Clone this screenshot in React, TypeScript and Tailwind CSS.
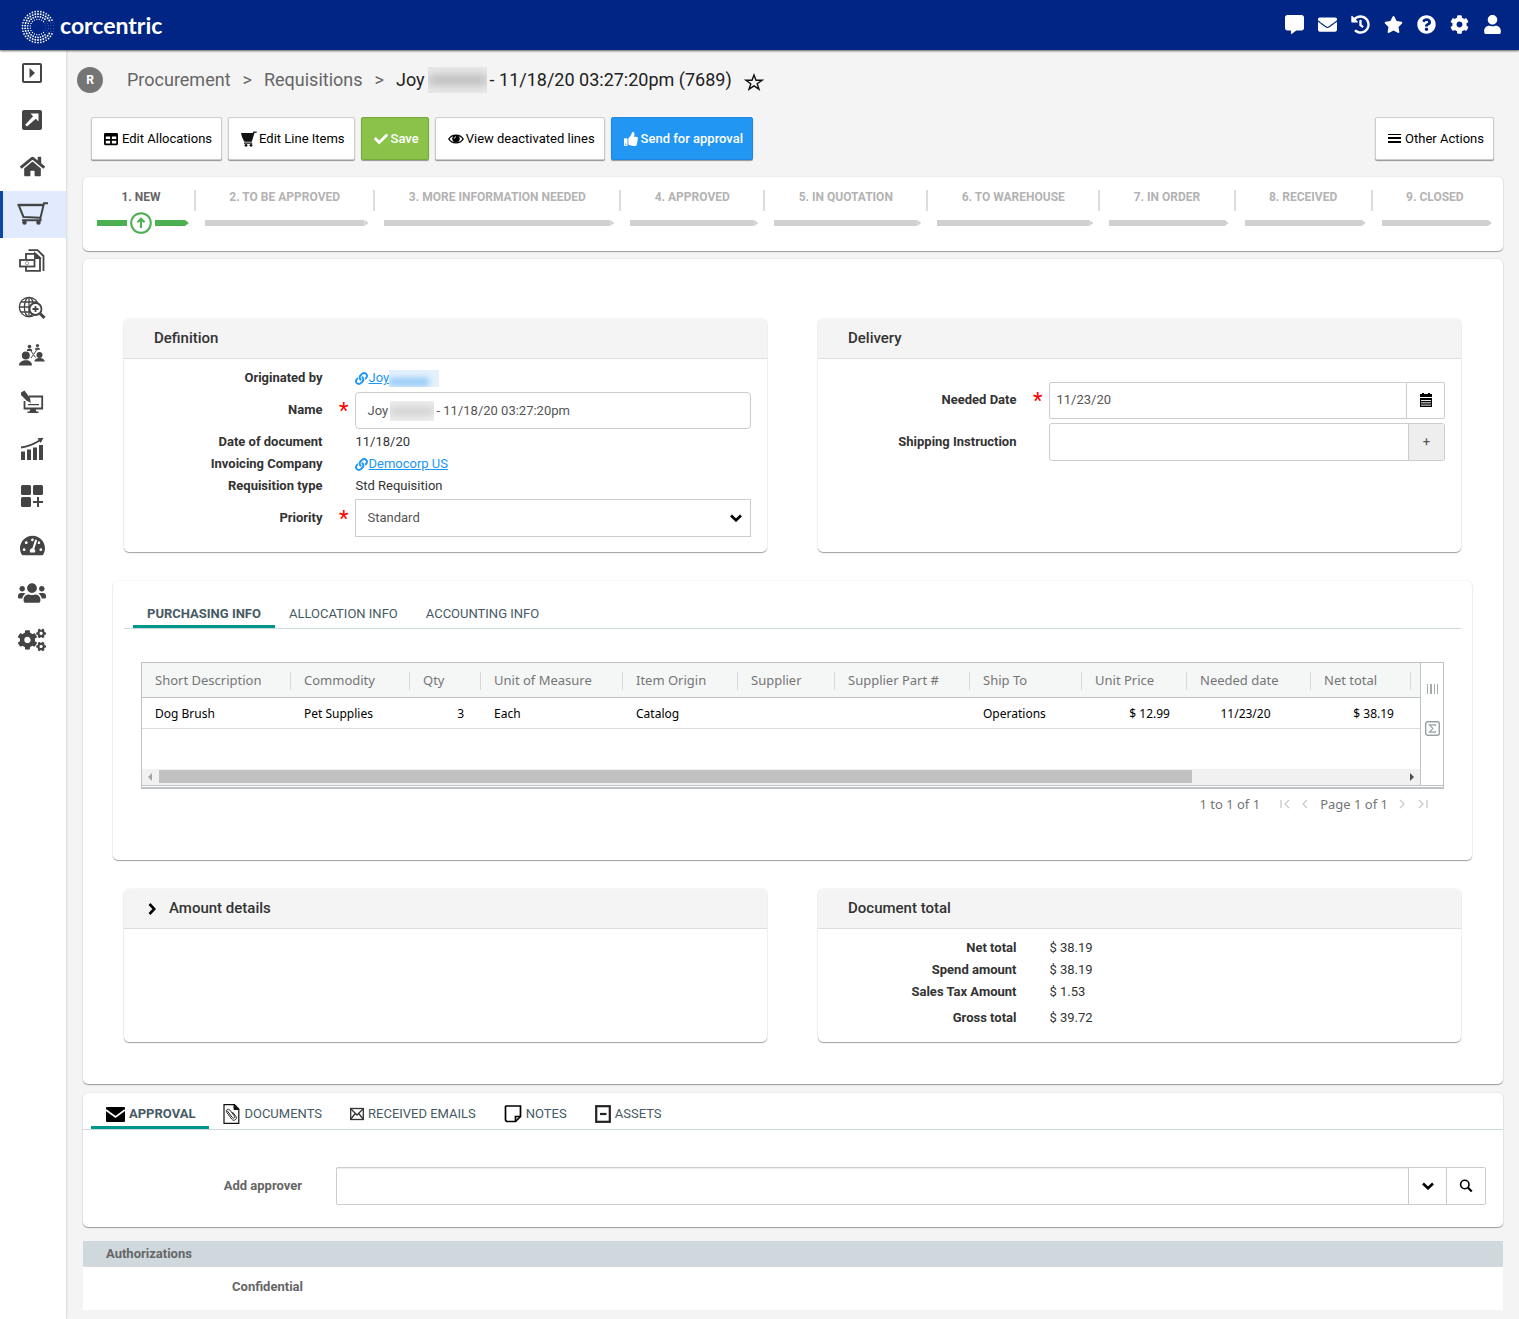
import React, { ReactNode } from 'react';
import {
  FaCheck,
  FaCog,
  FaCogs,
  FaCommentAlt,
  FaEnvelope,
  FaHistory,
  FaHome,
  FaLink,
  FaQuestionCircle,
  FaStar,
  FaTable,
  FaTachometerAlt,
  FaThumbsUp,
  FaUser,
  FaUsers,
} from 'react-icons/fa';

const cardShadow = 'shadow-[0_1px_1px_#00000059,0_0_2px_#0000001f]';

type IconProps = { className?: string };

const LogoMark = () => {
  const rings = [
    { r: 15.6, n: 34, size: 0.85, gap: 0.3 },
    { r: 13, n: 30, size: 0.95, gap: 0.5 },
    { r: 10.4, n: 26, size: 0.85, gap: 0.7 },
    { r: 7.8, n: 20, size: 0.65, gap: 0.75 },
  ];

  return (
    <svg width="34" height="34" viewBox="-17 -17 34 34" fill="#fff" aria-hidden="true">
      {rings.map((ring) =>
        Array.from({ length: ring.n }, (_, i) => {
          const a = ((i + 0.5) / ring.n) * Math.PI * 2;
          const fromRight = Math.min(a, Math.PI * 2 - a);
          const faded = fromRight < ring.gap;
          return (
            <circle
              key={`${ring.r}-${i}`}
              cx={Math.cos(a) * ring.r}
              cy={Math.sin(a) * ring.r}
              r={faded ? 0.4 : ring.size}
              opacity={faded ? 0.6 : 1}
            />
          );
        }),
      )}
    </svg>
  );
};

const PlayBoxIcon = () => (
  <svg width="20" height="20" viewBox="0 0 20 20" fill="none">
    <rect x="1" y="1" width="18" height="18" rx="1" stroke="currentColor" strokeWidth="2" />
    <path d="M7.5 5v10l5.500-5z" fill="currentColor" />
  </svg>
);

const LaunchIcon = () => (
  <svg width="20" height="20" viewBox="0 0 20 20">
    <rect width="20" height="20" rx="2" fill="currentColor" />
    <path d="M8.5 3.5h8v8l-2.7-2.7L5 16.6 3.2 14.800l7.900-8.600z" fill="#fff" />
  </svg>
);

const CartIcon = () => (
  <svg width="31" height="24" viewBox="0 0 31 24" fill="none" stroke="currentColor" strokeWidth="2">
    <path d="M.5 3H26" strokeWidth="2.4" />
    <path d="M2 4l4.500 11 17 .8L27 1.200h4M5 18.200h18.500v-2.500" />
    <circle cx="7.500" cy="20.500" r="2.200" fill="currentColor" stroke="none" />
    <circle cx="21.500" cy="20.500" r="2.200" fill="currentColor" stroke="none" />
  </svg>
);

const InvoiceIcon = () => (
  <svg width="26" height="24" viewBox="0 0 26 24" fill="none" stroke="currentColor" strokeWidth="1.8">
    <path d="M9.500 1.200h9L24.500 7v15M7 10V4.800h9.500L21 9v12.800H7V18" />
    <path d="M16 4.500V9h4.500z" fill="currentColor" />
    <rect x="1" y="11" width="14.500" height="6.500" fill="#fff" />
    <circle cx="8" cy="14.200" r="1.600" strokeWidth=".5" />
  </svg>
);

const GlobeSearchIcon = () => (
  <svg width="28" height="24" viewBox="0 0 28 24" fill="none" stroke="currentColor" strokeWidth="1.3">
    <circle cx="11" cy="11" r="9.700" />
    <ellipse cx="11" cy="11" rx="4.600" ry="9.700" />
    <path d="M11 1.300v19.400M1.300 11h19M3 6h16M3 16h16" />
    <circle cx="17.500" cy="13" r="6" fill="#fff" strokeWidth="1.800" />
    <path d="M17.500 10v6M14.500 13h6" strokeWidth="1.800" />
    <path d="M22 17.500l4.500 4.300" strokeWidth="3" />
  </svg>
);

const NetworkIcon = () => (
  <svg width="26" height="24" viewBox="0 0 26 24" fill="currentColor">
    <circle cx="6.800" cy="12.500" r="4" />
    <path d="M0 22.500c0-3.500 3-4.300 5.200-5.200h3.300c2.300.9 4.500 1.700 4.500 5.200z" />
    <circle cx="20.500" cy="12" r="3" />
    <path d="M15.500 18.500c0-2.600 2.500-3 3.800-3.600h2.600c1.300.6 3.800 1 3.800 3.600z" />
    <circle cx="10.500" cy="3.500" r="1.800" />
    <path d="M7.800 8c0-1.800 1.500-2.200 2.700-2.400 1.200.2 2.700.6 2.700 2.400z" />
    <circle cx="18.500" cy="2.500" r="1.600" />
    <path d="M16 6.800c0-1.600 1.300-2 2.500-2.200 1.200.2 2.500.6 2.500 2.200z" />
    <path d="M12 15l6-8.500M12 8l4.500 6.500" stroke="currentColor" strokeWidth="1" />
  </svg>
);

const DesktopPenIcon = () => (
  <svg width="24" height="24" viewBox="0 0 24 24">
    <path d="M9 6.500h13.200v12H4.500V11" fill="none" stroke="currentColor" strokeWidth="1.800" />
    <path d="M10.500 19h5l1 2.500h2V23h-11v-1.500h2zM8 14h11v1.200H8z" fill="currentColor" />
    <path d="M1 2.500 4.500.5l5.500 7.500.8 5-4.600-2.800L1 5z" fill="currentColor" />
  </svg>
);

const GrowthIcon = () => (
  <svg width="24" height="24" viewBox="0 0 24 24" fill="currentColor">
    <path d="M1 14.500h4V23H1zM7 12.500h4V23H7zM13 10.500h4V23h-4zM19 8h4v15h-4z" />
    <path d="M1 10.500C9 9.500 14 7 20 3.200" fill="none" stroke="currentColor" strokeWidth="1.800" />
    <path d="M17.500 1.200 23.500.8l-2.800 5.200z" />
  </svg>
);

const WidgetsIcon = () => (
  <svg width="22" height="22" viewBox="0 0 22 22" fill="currentColor">
    <rect width="10" height="10" rx="1.500" />
    <rect x="12" width="10" height="10" rx="1.500" />
    <rect y="12" width="10" height="10" rx="1.500" />
    <path d="M16 12h2v4h4v2h-4v4h-2v-4h-4v-2h4z" />
  </svg>
);

const FilledCartIcon = () => (
  <svg width="16" height="16" viewBox="0 0 16 16" fill="#111">
    <path d="M0 2h11.800L12.500.5h3.200v1.200h-2.200l-2.700 9H3.300L1 6zM3 11.500h8.200v1.300H3z" />
    <circle cx="5" cy="14.300" r="1.400" />
    <circle cx="10" cy="14.300" r="1.400" />
  </svg>
);

const EyeIcon = () => (
  <svg width="16" height="12" viewBox="0 0 16 12" fill="none" stroke="#000">
    <path d="M.8 6C4 .8 12 .8 15.200 6 12 11.200 4 11.200.8 6z" strokeWidth="1.400" />
    <circle cx="8" cy="5.800" r="3.300" fill="#000" />
    <path d="M6.300 5.500c0-1 .7-1.600 1.700-1.600" stroke="#fff" />
  </svg>
);

const MenuLinesIcon = () => (
  <svg width="13" height="9" viewBox="0 0 13 9" fill="#000" className="mr-0.5">
    <path d="M0 0h13v1H0zM0 3h13v2H0zM0 7h13v2H0z" />
  </svg>
);

const StarOutlineIcon = () => (
  <svg width="20" height="18" viewBox="0 0 20 18" fill="none" stroke="#111" strokeWidth="1.400">
    <path d="M10 2l2 5.300h6l-4.800 3.400L15 16.200l-5-3.400-5 3.400 1.800-5.500L2 7.300h6z" />
  </svg>
);

const CalendarIcon = () => (
  <svg width="14" height="14" viewBox="0 0 14 14">
    <path d="M3 0h2v1h4V0h2v1h2v3H1V1h2zM1 5h12v9H1z" fill="#000" />
    <path d="M2 7.500h10M2 9.800h10M2 12.100h10" stroke="#fff" strokeWidth=".9" />
  </svg>
);

const ChevronIcon = ({ className }: IconProps) => (
  <svg width="12" height="8" viewBox="0 0 12 8" className={className}>
    <path d="M1 1.500l5 4.800 5-4.800" fill="none" stroke="#000" strokeWidth="2.600" />
  </svg>
);

const SearchIcon = () => (
  <svg width="14" height="14" viewBox="0 0 14 14" fill="none" stroke="#000">
    <circle cx="5.800" cy="5.500" r="4.200" strokeWidth="1.600" />
    <path d="M8.800 8.500l4 4" strokeWidth="2.200" />
  </svg>
);

const ApprovalIcon = () => (
  <svg width="20" height="18" viewBox="0 0 20 18">
    <rect x="1" y="2" width="19" height="15" rx="1" fill="#000" />
    <path d="M1 5l9.500 7L20 5" fill="none" stroke="#fff" strokeWidth="1.800" />
  </svg>
);

const DocumentsIcon = () => (
  <svg width="17" height="20" viewBox="0 0 17 20" fill="none" stroke="#111">
    <path d="M1 .7h10.500L15.800 5v14.300H1z" strokeWidth="1.200" />
    <path d="M11 .7V5.500h4.800z" fill="#111" />
    <path d="M4 6.500l5.500 7.200c1 1.300 3-.2 2-1.500L6.800 6c-1.600-2-4.600.3-3 2.400l5 6.800c2.200 2.700 6-.3 4-3L9.500 8" strokeWidth=".9" />
  </svg>
);

const ReceivedIcon = () => (
  <svg width="14" height="14" viewBox="1 0 14 14" fill="none" stroke="#333" strokeWidth="1.300">
    <rect x="1.700" y="1.500" width="12.600" height="11" />
    <path d="M1.500 1.500 8 8l6.500-6.500M1.500 12.500l4.800-6M14.500 12.500l-4.800-6" />
  </svg>
);

const NotesIcon = () => (
  <svg width="18" height="18" viewBox="0 0 18 18" fill="none" stroke="#000" strokeWidth="1.700">
    <path d="M2 1h14.500v10.500l-5 5H2.500L1.500 15V1.500z" />
    <path d="M11.500 16.500v-5h5" />
  </svg>
);

const AssetsIcon = () => (
  <svg width="16" height="18" viewBox="0 0 16 18" fill="none" stroke="#222" strokeWidth="2.200">
    <rect x="1.200" y="1.200" width="13.600" height="15.600" />
    <path d="M5 9h6.500" />
  </svg>
);

const headerActions = [
  { label: 'Messages', Icon: FaCommentAlt },
  { label: 'Mail', Icon: FaEnvelope },
  { label: 'History', Icon: FaHistory },
  { label: 'Favorites', Icon: FaStar },
  { label: 'Help', Icon: FaQuestionCircle },
  { label: 'Settings', Icon: FaCog },
  { label: 'Account', Icon: FaUser },
];

const Header = () => (
  <header className="relative z-10 flex h-[50px] items-center justify-between bg-[#002584] pr-[17px] pl-[21px] shadow-[0_1px_2px_#00000099]">
    <a href="#" className="flex items-center gap-[5px] pt-1 text-white">
      <LogoMark />
      <span className="pb-1 font-[Lato] text-[23px] leading-[24px] font-bold">corcentric</span>
    </a>
    <nav className="flex gap-[13px] pb-0.5">
      {headerActions.map(({ label, Icon }) => (
        <button key={label} aria-label={label} className="flex w-5 justify-center text-white">
          <Icon size={19} />
        </button>
      ))}
    </nav>
  </header>
);

const modules = [
  { label: 'Expand menu', icon: <PlayBoxIcon /> },
  { label: 'Launch', icon: <LaunchIcon /> },
  { label: 'Home', icon: <FaHome size={25} /> },
  { label: 'Procurement', icon: <CartIcon />, active: true },
  { label: 'Invoices', icon: <InvoiceIcon /> },
  { label: 'Sourcing', icon: <GlobeSearchIcon /> },
  { label: 'Suppliers', icon: <NetworkIcon /> },
  { label: 'Contracts', icon: <DesktopPenIcon /> },
  { label: 'Reports', icon: <GrowthIcon /> },
  { label: 'Widgets', icon: <WidgetsIcon /> },
];

const adminModules = [
  { label: 'Dashboard', icon: <FaTachometerAlt size={25} /> },
  { label: 'Users', icon: <FaUsers size={28} /> },
  { label: 'Administration', icon: <FaCogs size={28} /> },
];

type ModuleProps = { label: string; icon: ReactNode; active?: boolean };

const ModuleLink = ({ label, icon, active }: ModuleProps) => (
  <a
    href="#"
    aria-label={label}
    className={`flex h-[47px] items-center justify-center border-l-3 pr-[5px] pb-0.5 text-[#444] ${
      active ? 'border-[#0d47a1] bg-[#e1ebfd]' : 'border-transparent'
    }`}
  >
    {icon}
  </a>
);

const Sidebar = () => (
  <nav className="w-[66px] flex-shrink-0 bg-white shadow-[0_0_3px_#00000033]">
    {modules.map((m) => (
      <ModuleLink key={m.label} {...m} />
    ))}
    <div className="pt-[3px]">
      {adminModules.map((m) => (
        <ModuleLink key={m.label} {...m} />
      ))}
    </div>
  </nav>
);

const Breadcrumb = () => (
  <div className="-ml-1.5 flex h-[59px] items-center text-[18px] text-[#666]">
    <span className="mr-6 flex h-[26px] w-[26px] items-center justify-center rounded-full bg-[#757575] text-xs font-bold text-white">
      R
    </span>
    <a href="#">Procurement</a>
    <span className="mx-3">&gt;</span>
    <a href="#">Requisitions</a>
    <span className="mx-3">&gt;</span>
    <h1 className="flex items-center text-[#212121]">
      Joy
      <span className="mx-[3px] h-[26px] w-[59px] overflow-hidden bg-[#e9e9e9] py-2">
        <span className="block h-2.5 w-full bg-[#b9b9b9] blur-[5px]" />
      </span>
      - 11/18/20 03:27:20pm (7689)
    </h1>
    <button aria-label="Add to favorites" className="ml-3 pt-1">
      <StarOutlineIcon />
    </button>
  </div>
);

type ToolButtonProps = { icon: ReactNode; children: ReactNode; tone?: 'plain' | 'green' | 'blue' };

const tones = {
  plain: 'border-[#ccc] bg-white text-black',
  green: 'border-[#76a83a] bg-[#8bc34a] text-white font-medium',
  blue: 'border-[#1e88e5] bg-[#2196f3] text-white font-medium',
};

const ToolButton = ({ icon, children, tone = 'plain' }: ToolButtonProps) => (
  <button
    className={`flex h-[43px] items-center gap-0.5 rounded-[2px] border pr-[9px] pl-3 text-[13px] whitespace-nowrap shadow-[0_1px_1px_#00000066] ${tones[tone]}`}
  >
    {icon}
    {children}
  </button>
);

const Toolbar = () => (
  <div className="mb-[17px] flex items-center gap-1.5 pr-[9px] pl-2">
    <ToolButton icon={<FaTable size={14} className="mr-0.5" />}>Edit Allocations</ToolButton>
    <ToolButton icon={<FilledCartIcon />}>Edit Line Items</ToolButton>
    <ToolButton tone="green" icon={<FaCheck size={14} className="mr-px" />}>
      Save
    </ToolButton>
    <ToolButton icon={<EyeIcon />}>View deactivated lines</ToolButton>
    <ToolButton tone="blue" icon={<FaThumbsUp size={14} className="mr-px" />}>
      Send for approval
    </ToolButton>
    <div className="ml-auto">
      <ToolButton icon={<MenuLinesIcon />}>Other Actions</ToolButton>
    </div>
  </div>
);

const steps = [
  '1. New',
  '2. To be approved',
  '3. More information needed',
  '4. Approved',
  '5. In quotation',
  '6. To warehouse',
  '7. In order',
  '8. Received',
  '9. Closed',
];

const BarTip = ({ className }: IconProps) => (
  <span className={`h-1.5 w-1 [clip-path:polygon(0_0,100%_50%,0_100%)] ${className}`} />
);

const Steps = () => (
  <ol className={`flex rounded-[5px] bg-white pr-[11px] pb-[17px] pl-3.5 ${cardShadow}`}>
    {steps.map((step, i) => (
      <React.Fragment key={step}>
        {i > 0 && <li aria-hidden="true" className="mt-[13px] mr-[9px] ml-[5px] h-[21px] w-0.5 bg-[#ddd]" />}
        <li className="flex-auto pt-3">
          <div
            className={`pr-7 pl-6 text-center text-xs font-bold whitespace-nowrap uppercase ${
              i === 0 ? 'text-[#666]' : 'text-[#b3b3b3]'
            }`}
          >
            {step}
          </div>
          {i === 0 ? (
            <div className="mt-[7px] flex h-[22px] items-center">
              <span className="h-1.5 flex-1 bg-[#4caf50]" />
              <svg width="28" height="22" viewBox="0 0 28 22" fill="none" stroke="#4caf50" strokeWidth="2">
                <circle cx="14" cy="11" r="9.800" />
                <path d="M14 16V7M10.500 10.200 14 6.700l3.500 3.500" />
              </svg>
              <span className="h-1.5 flex-1 bg-[#4caf50]" />
              <BarTip className="bg-[#4caf50]" />
            </div>
          ) : (
            <div className="mt-[7px] flex h-[22px] items-center">
              <span className="h-1.5 flex-1 bg-[#d0d0d0]" />
              <BarTip className="bg-[#d0d0d0]" />
            </div>
          )}
        </li>
      </React.Fragment>
    ))}
  </ol>
);

type PanelProps = { title: string; icon?: ReactNode; className: string; children?: ReactNode };

const Panel = ({ title, icon, className, children }: PanelProps) => (
  <section className={`flex-1 overflow-hidden rounded-[5px] bg-white ${cardShadow} ${className}`}>
    <h2 className="flex h-10 items-center border-b border-[#ddd] bg-[#f4f4f4] text-[15px] font-medium text-[#333]">
      <span className={icon ? 'flex w-[45px] justify-center pl-2.5' : 'w-[30px]'}>{icon}</span>
      {title}
    </h2>
    {children}
  </section>
);

type FieldProps = { label: string; htmlFor?: string; required?: boolean; tall?: boolean; children: ReactNode };

const Field = ({ label, htmlFor, required, tall, children }: FieldProps) => (
  <div className={`grid grid-cols-[36%_1fr] items-center text-[13px] ${tall ? 'h-[42px]' : 'h-[22px]'}`}>
    <div className="relative pr-[33px] text-right font-bold text-[#333]">
      {htmlFor ? <label htmlFor={htmlFor}>{label}</label> : <span>{label}</span>}
      {required && (
        <span className="absolute top-0 right-[7px] text-[22px] leading-[22px] font-normal text-[#f00]">*</span>
      )}
    </div>
    <div className="min-w-0 pr-4 text-[#333]">{children}</div>
  </div>
);

const RecordLink = ({ children }: { children: ReactNode }) => (
  <a href="#" className="flex items-center text-[#2196f3]">
    <FaLink size={13} />
    <span className="underline">{children}</span>
  </a>
);

const Definition = () => (
  <Panel title="Definition" className="min-h-[233px]">
    <div className="pt-2">
      <Field label="Originated by">
        <div className="flex items-center">
          <RecordLink>Joy</RecordLink>
          <span className="h-[17px] w-[50px] overflow-hidden bg-[#e4f1fd] pt-2">
            <span className="block h-2 w-10 bg-[#90c8f8] blur-[3px]" />
          </span>
        </div>
      </Field>
      <Field label="Name" htmlFor="name" required tall>
        <div className="relative">
          <input
            id="name"
            defaultValue="Joy               - 11/18/20 03:27:20pm"
            className="block h-[37px] w-full rounded-[4px] border border-[#ccc] px-[11px] text-[#555]"
          />
          <span className="absolute top-[9px] left-[35px] h-5 w-11 overflow-hidden bg-[#eee] py-1.5">
            <span className="block h-2 w-full bg-[#ccc] blur-[4px]" />
          </span>
        </div>
      </Field>
      <Field label="Date of document">11/18/20</Field>
      <Field label="Invoicing Company">
        <RecordLink>Democorp US</RecordLink>
      </Field>
      <Field label="Requisition type">Std Requisition</Field>
      <Field label="Priority" htmlFor="priority" required tall>
        <div className="relative">
          <select
            id="priority"
            className="block h-[38px] w-full appearance-none border border-[#ccc] bg-white px-[11px] text-[#555]"
          >
            <option>Standard</option>
          </select>
          <ChevronIcon className="pointer-events-none absolute top-[15px] right-[9px]" />
        </div>
      </Field>
    </div>
  </Panel>
);

const Delivery = () => (
  <Panel title="Delivery" className="min-h-[233px]">
    <div className="pt-5">
      <Field label="Needed Date" htmlFor="needed-date" required tall>
        <div className="flex h-[37px] rounded-[2px] border border-[#ccc]">
          <input id="needed-date" defaultValue="11/23/20" className="min-w-0 flex-1 px-1.5 text-[#555]" />
          <button aria-label="Open calendar" className="flex w-[38px] items-center justify-center border-l border-[#ccc]">
            <CalendarIcon />
          </button>
        </div>
      </Field>
      <Field label="Shipping Instruction" htmlFor="shipping" tall>
        <div className="flex h-[38px] overflow-hidden rounded-[3px] border border-[#ccc]">
          <input id="shipping" className="min-w-0 flex-1 px-[11px] text-[#555]" />
          <button aria-label="Add instruction" className="w-9 border-l border-[#ccc] bg-[#eee] text-[#555]">
            +
          </button>
        </div>
      </Field>
    </div>
  </Panel>
);

type TabProps = { label: string; icon?: ReactNode; active?: boolean };

const Tab = ({ label, icon, active }: TabProps) => (
  <button
    role="tab"
    aria-selected={!!active}
    className={`flex items-center gap-1 border-b-3 px-3.5 pt-[3px] text-[13px] whitespace-nowrap text-[#455a64] uppercase ${
      active ? 'border-[#009688] font-bold' : 'border-transparent'
    }`}
  >
    {icon}
    {label}
  </button>
);

const columns = [
  { title: 'Short Description', value: 'Dog Brush', width: 149 },
  { title: 'Commodity', value: 'Pet Supplies', width: 119 },
  { title: 'Qty', value: '3', width: 71, right: true },
  { title: 'Unit of Measure', value: 'Each', width: 142 },
  { title: 'Item Origin', value: 'Catalog', width: 115 },
  { title: 'Supplier', value: '', width: 97 },
  { title: 'Supplier Part #', value: '', width: 135 },
  { title: 'Ship To', value: 'Operations', width: 112 },
  { title: 'Unit Price', value: '$ 12.99', width: 105, right: true },
  { title: 'Needed date', value: '11/23/20', width: 124, center: true },
  { title: 'Net total', value: '$ 38.19', width: 100, right: true },
];

const LineItems = () => (
  <div className="border border-b-2 border-[#bdc3c7] pb-px font-['Noto_Sans'] text-[13px]">
    <div className="flex border-b border-[#bdc3c7]">
      <div className="flex min-w-0 flex-1 flex-col overflow-hidden">
        <table className="w-full table-fixed">
          <colgroup>
            {columns.map((c) => (
              <col key={c.title} style={{ width: c.width }} />
            ))}
            <col />
          </colgroup>
          <thead>
            <tr className="h-[34px] border-b border-[#bdc3c7] bg-[#f5f7f7] text-left text-[#757575]">
              {columns.map((c) => (
                <th key={c.title} className="px-0 pt-0.5 pb-0 font-normal whitespace-nowrap">
                  <div className="flex h-[18px] items-center border-r border-[#d5d9db] pl-[13px]">{c.title}</div>
                </th>
              ))}
              <th />
            </tr>
          </thead>
          <tbody>
            <tr className="h-[31px] border-b border-[#d9dcde] text-xs text-black">
              {columns.map((c) => (
                <td
                  key={c.title}
                  className={`pt-[3px] pb-0 pl-[13px] whitespace-nowrap ${
                    c.right ? 'pr-[17px] text-right' : c.center ? 'pr-5 text-center' : ''
                  }`}
                >
                  {c.value}
                </td>
              ))}
              <td />
            </tr>
          </tbody>
        </table>
        <div className="mt-10 flex h-4 items-center bg-[#f1f1f1] py-px">
          <svg width="17" height="8" viewBox="0 0 17 8">
            <path d="M10 0v8L6 4z" fill="#a3a3a3" />
          </svg>
          <div className="flex-1">
            <div className="h-[13px] w-[83%] bg-[#c1c1c1]" />
          </div>
          <svg width="17" height="8" viewBox="0 0 17 8">
            <path d="M7 0v8l4-4z" fill="#505050" />
          </svg>
        </div>
      </div>
      <div className="flex w-[23px] flex-col items-center gap-[27px] border-l border-[#bdc3c7] pt-[21px]">
        <button aria-label="Columns" className="block">
          <svg width="11" height="10" viewBox="0 0 11 10" fill="#a4abab">
            <path d="M0 0h1v10H0zM3 0h2v10H3zM7 0h1v10H7zM10 0h1v10h-1z" />
          </svg>
        </button>
        <button aria-label="Totals">
          <svg width="15" height="15" viewBox="0 0 15 15" fill="none" stroke="#99a2a2">
            <rect x=".7" y=".7" width="13.600" height="13.600" rx="2" strokeWidth="1.400" />
            <path d="M10.500 5V3.800h-6L8 7.500l-3.500 3.700h6V10" strokeWidth="1.200" />
          </svg>
        </button>
      </div>
    </div>
  </div>
);

const PageArrow = ({ d, label }: { d: string; label: string }) => (
  <button aria-label={label}>
    <svg width="10" height="10" viewBox="0 0 10 10" fill="none" stroke="#ccc" strokeWidth="1.400">
      <path d={d} />
    </svg>
  </button>
);

const Pager = () => (
  <div className="flex items-center justify-end gap-2.5 pt-[5px] pr-4 font-['Noto_Sans'] text-[13px] leading-[20px] text-[#757575]">
    <span className="mr-2.5">1 to 1 of 1</span>
    <PageArrow label="First page" d="M1 1v8M9 1 5 5l4 4" />
    <PageArrow label="Previous page" d="M7 1 3 5l4 4" />
    <span>Page 1 of 1</span>
    <PageArrow label="Next page" d="M2 1l4 4-4 4" />
    <PageArrow label="Last page" d="M1 1l4 4-4 4M9 1v8" />
  </div>
);

const Purchasing = () => (
  <section className={`my-[29px] mr-[31px] ml-[30px] min-h-[279px] rounded-[5px] bg-white px-[11px] pt-[18px] ${cardShadow}`}>
    <div role="tablist" className="flex h-[30px] border-b border-[#cfd8dc] pl-[9px]">
      <Tab label="Purchasing info" active />
      <Tab label="Allocation info" />
      <Tab label="Accounting info" />
    </div>
    <div className="px-[17px] pt-[33px]">
      <LineItems />
      <Pager />
    </div>
  </section>
);

const DocumentTotal = () => (
  <Panel title="Document total" className="min-h-[153px]">
    <div className="pt-2">
      <Field label="Net total">$ 38.19</Field>
      <Field label="Spend amount">$ 38.19</Field>
      <Field label="Sales Tax Amount">$ 1.53</Field>
      <div className="pt-1">
        <Field label="Gross total">$ 39.72</Field>
      </div>
    </div>
  </Panel>
);

const Approval = () => (
  <section className={`mt-[9px] rounded-[5px] bg-white pb-[22px] ${cardShadow}`}>
    <div role="tablist" className="flex h-[37px] border-b border-[#cfd8dc] px-2 pt-1.5">
      <Tab label="Approval" icon={<ApprovalIcon />} active />
      <Tab label="Documents" icon={<DocumentsIcon />} />
      <Tab label="Received emails" icon={<ReceivedIcon />} />
      <Tab label="Notes" icon={<NotesIcon />} />
      <Tab label="Assets" icon={<AssetsIcon />} />
    </div>
    <div className="flex items-center pt-[37px] pr-[17px] text-[13px]">
      <label htmlFor="approver" className="w-[253px] pr-[34px] text-right font-bold text-[#666]">
        Add approver
      </label>
      <div className="flex h-[38px] flex-1 rounded-[2px] border border-[#ccc]">
        <input id="approver" className="min-w-0 flex-1 px-[11px] shadow-[inset_0_1px_1px_#00000013]" />
        <button aria-label="Show approvers" className="flex w-[38px] items-center justify-center border-l border-[#ccc]">
          <ChevronIcon />
        </button>
        <button aria-label="Search approvers" className="flex w-[39px] items-center justify-center border-l border-[#ccc]">
          <SearchIcon />
        </button>
      </div>
    </div>
  </section>
);

const Authorizations = () => (
  <section className="mt-3.5 bg-white text-[13px] font-bold text-[#666]">
    <h2 className="border-b border-[#d8d8d8] bg-[#cfd8dc] pl-[23px] leading-[25px]">Authorizations</h2>
    <div className="h-[43px] w-[220px] pt-2.5 text-right leading-[20px]">Confidential</div>
  </section>
);

export default function App() {
  return (
    <div className="flex min-h-screen flex-col bg-[#f4f4f4] font-[Roboto,sans-serif]">
      <Header />
      <div className="flex flex-1">
        <Sidebar />
        <main className="min-w-0 flex-1 pr-4 pb-[9px] pl-[17px]">
          <Breadcrumb />
          <div className="pt-2">
            <Toolbar />
          </div>
          <Steps />
          <div className={`mt-2 rounded-[5px] bg-white pt-[60px] pb-[42px] ${cardShadow}`}>
            <div className="flex gap-[51px] pr-[42px] pl-[41px]">
              <Definition />
              <Delivery />
            </div>
            <Purchasing />
            <div className="flex gap-[51px] pr-[42px] pl-[41px]">
              <Panel
                title="Amount details"
                icon={<ChevronIcon className="-rotate-90" />}
                className="min-h-[153px]"
              />
              <DocumentTotal />
            </div>
          </div>
          <Approval />
          <Authorizations />
        </main>
      </div>
    </div>
  );
}
